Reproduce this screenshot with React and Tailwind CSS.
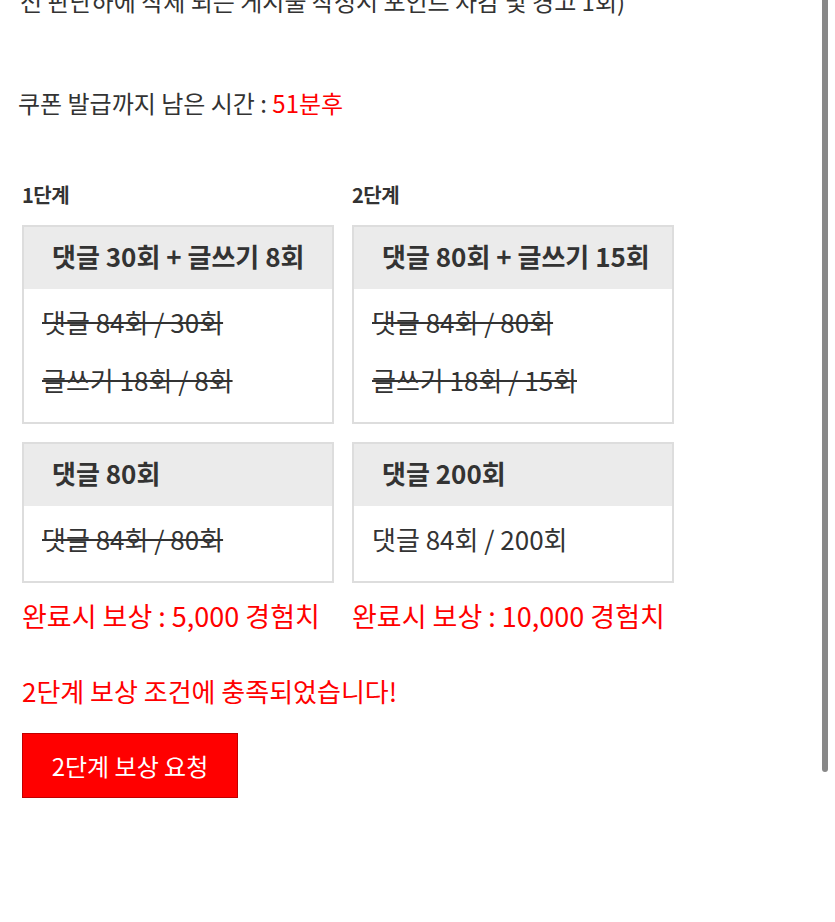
import React from "react";

const stages = [
  {
    label: "1단계",
    width: "w-[312px]",
    cards: [
      {
        title: "댓글 30회 + 글쓰기 8회",
        rows: [
          { text: "댓글 84회 / 30회", done: true },
          { text: "글쓰기 18회 / 8회", done: true },
        ],
      },
      {
        title: "댓글 80회",
        rows: [{ text: "댓글 84회 / 80회", done: true }],
      },
    ],
    reward: "완료시 보상 : 5,000 경험치",
  },
  {
    label: "2단계",
    width: "w-[322px]",
    cards: [
      {
        title: "댓글 80회 + 글쓰기 15회",
        rows: [
          { text: "댓글 84회 / 80회", done: true },
          { text: "글쓰기 18회 / 15회", done: true },
        ],
      },
      {
        title: "댓글 200회",
        rows: [{ text: "댓글 84회 / 200회", done: false }],
      },
    ],
    reward: "완료시 보상 : 10,000 경험치",
  },
];

function MissionCard({ card }) {
  return (
    <div className="border-2 border-[#dddddd] bg-white">
      <div className="bg-[#ebebeb] h-[62px] flex items-center pb-[6px] px-[28px] text-[26px] font-bold text-[#333] whitespace-nowrap">
        {card.title}
      </div>
      <div className="px-[18px] pt-[3px] pb-[14px] flex flex-col">
        {card.rows.map((row) => (
          <div
            key={row.text}
            className={`h-[58px] flex items-center text-[26px] text-[#333] whitespace-nowrap ${
              row.done ? "line-through" : ""
            }`}
          >
            {row.text}
          </div>
        ))}
      </div>
    </div>
  );
}

export default function App() {
  return (
    <div
      className="relative w-[835px] h-[922px] overflow-hidden bg-white text-[#333]"
      style={{ fontFamily: '"Noto Sans CJK KR", "Noto Sans", sans-serif' }}
    >
      <div className="pl-[20px]">
        <p className="-mt-[16px] text-[24px] leading-[34px] whitespace-nowrap">
          전 판단하에 삭제 되는 게시물 작성시 포인트 차감 및 경고 1회)
        </p>

        <p className="mt-[70px] -ml-[2px] text-[24px] leading-[30px]">
          쿠폰 발급까지 남은 시간 : <span className="text-[#ff0000]">51분후</span>
        </p>

        <div className="mt-[64px] flex gap-[18px] items-start pl-[2px]">
          {stages.map((stage) => (
            <div key={stage.label} className={`flex flex-col ${stage.width}`}>
              <div className="text-[20px] font-bold leading-[26px] h-[43px] tracking-[-0.5px]">
                {stage.label}
              </div>
              <div className="flex flex-col gap-[18px]">
                {stage.cards.map((card) => (
                  <MissionCard key={card.title} card={card} />
                ))}
              </div>
              <div className="mt-[15px] text-[27px] leading-[36px] text-[#ff0000] whitespace-nowrap">
                {stage.reward}
              </div>
            </div>
          ))}
        </div>

        <p className="mt-[39px] pl-[2px] text-[26px] leading-[36px] text-[#ff0000]">
          2단계 보상 조건에 충족되었습니다!
        </p>

        <button className="mt-[24px] ml-[2px] w-[216px] h-[65px] bg-[#ff0000] border border-[#c00000] text-white text-[24px]">
          2단계 보상 요청
        </button>
      </div>

      <div className="absolute right-[7px] top-0 w-[6px] h-[772px] rounded-b-full bg-[#888888]" />
    </div>
  );
}
